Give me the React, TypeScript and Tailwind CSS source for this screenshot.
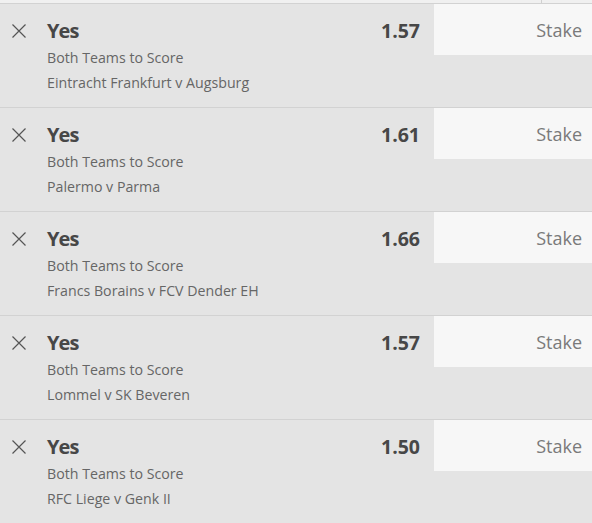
import React from "react";

const bets = [
  { odds: "1.57", match: "Eintracht Frankfurt v Augsburg" },
  { odds: "1.61", match: "Palermo v Parma" },
  { odds: "1.66", match: "Francs Borains v FCV Dender EH" },
  { odds: "1.57", match: "Lommel v SK Beveren" },
  { odds: "1.50", match: "RFC Liege v Genk II" },
];

function XIcon() {
  return (
    <svg width="16" height="16" viewBox="0 0 16 16" className="block">
      <path d="M1.5 1.5 L14.5 14.5 M14.5 1.5 L1.5 14.5" stroke="#555" strokeWidth="1.2" fill="none" />
    </svg>
  );
}

export default function App() {
  return (
    <div
      className="w-[592px] h-[523px] overflow-hidden bg-[#e4e4e4]"
      style={{ fontFamily: '"Open Sans", "Noto Sans", sans-serif' }}
    >
      <div className="h-[3px] bg-[#f0f0f0] flex">
        <div className="w-[542px] border-r border-[#d0d0d0]" />
      </div>
      {bets.map((b, i) => (
        <div key={i} className="h-[104px] border-t border-[#d2d2d2] flex">
          <div className="w-[47px] pl-[11px] pt-[19px]">
            <XIcon />
          </div>
          <div className="flex-1 flex flex-col pt-[13px]">
            <div className="text-[20px] leading-[28px] font-bold text-[#474747] tracking-[-0.9px]">Yes</div>
            <div className="text-[14.2px] leading-[25px] text-[#666]">Both Teams to Score</div>
            <div className="text-[14.2px] leading-[25px] text-[#666]">{b.match}</div>
          </div>
          <div className="pt-[13px] pr-[14px] text-[19.5px] leading-[28px] font-bold text-[#474747]">{b.odds}</div>
          <div className="w-[158px] h-[51px] bg-[#f7f7f7] flex items-center justify-end pr-[10px] pt-[2px] text-[18px] text-[#7a7a7a]">
            Stake
          </div>
        </div>
      ))}
    </div>
  );
}
